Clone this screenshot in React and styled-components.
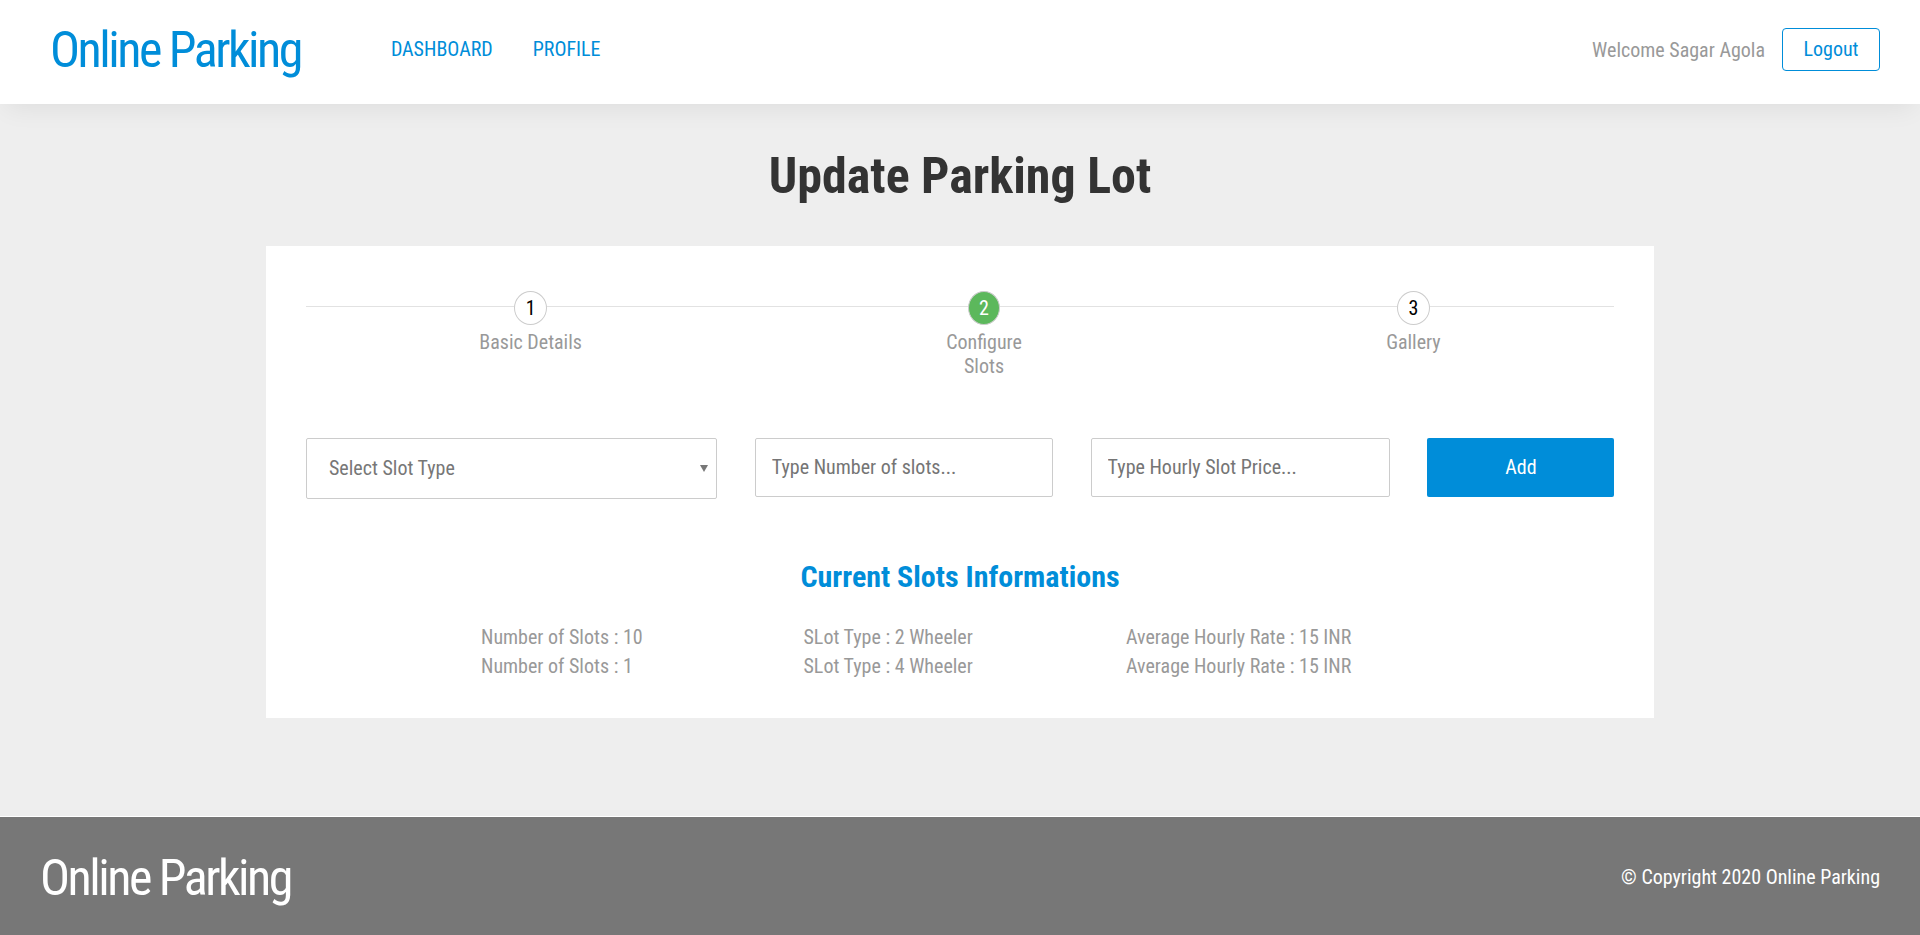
import React from "react";
import styled, { createGlobalStyle } from "styled-components";

const blue = "#008dd9";

const GlobalStyle = createGlobalStyle`
  *, *::before, *::after { box-sizing: border-box; }
  body {
    margin: 0;
    background: #eee;
    color: #999;
    font-family: "Roboto Condensed", Roboto, "Liberation Sans", sans-serif;
    font-stretch: 75%;
    font-size: 20px;
    line-height: 24px;
  }
  h1, h2, p { margin: 0; }
  input, select, button { font: inherit; letter-spacing: inherit; font-stretch: inherit; }
`;

const Page = styled.div`
  display: flex;
  flex-direction: column;
  height: 935px;
  overflow: hidden;
`;

const Header = styled.header`
  display: flex;
  align-items: flex-start;
  height: 104px;
  padding: 20px 40px 0 50px;
  background: #fff;
  box-shadow: 0 10px 24px -6px rgba(0, 0, 0, 0.07);
`;

const Logo = styled.a`
  color: ${(p) => p.$color};
  font-size: 50px;
  line-height: 60px;
  letter-spacing: -2.5px;
  white-space: nowrap;
`;

const Nav = styled.nav`
  display: flex;
  gap: 40px;
  margin: 17px auto 0 90px;
`;

const NavLink = styled.a`
  color: ${blue};
  text-transform: uppercase;
`;

const Welcome = styled.span`
  margin: 18px 17px 0 0;
`;

const LogoutButton = styled.button`
  width: 98px;
  height: 43px;
  margin-top: 8px;
  padding: 0 0 1px;
  border: 1px solid ${blue};
  border-radius: 4px;
  background: #fff;
  color: ${blue};
`;

const Title = styled.h1`
  margin-top: 42px;
  color: #333;
  font-size: 50px;
  line-height: 60px;
  text-align: center;
`;

const Card = styled.main`
  width: 1388px;
  height: 472px;
  margin: 40px auto 0;
  padding: 45px 40px 0;
  background: #fff;
`;

const Steps = styled.div`
  display: flex;
  justify-content: space-around;
  height: 147px;
  background: linear-gradient(#e2e2e2, #e2e2e2) 0 15px / 100% 1px no-repeat;
`;

const Step = styled.div`
  display: flex;
  flex-direction: column;
  align-items: center;
  max-width: 111px;
  text-align: center;
`;

const StepNumber = styled.span`
  width: ${(p) => (p.$active ? 32 : 33)}px;
  height: 34px;
  margin-bottom: 5px;
  border: 1px solid #ccc;
  border-radius: 50%;
  background: ${(p) => (p.$active ? "#5cb85c" : "#fff")};
  color: ${(p) => (p.$active ? "#fff" : "#000")};
  line-height: 32px;
`;

const StepLabel = styled.span``;

const SlotForm = styled.form`
  display: grid;
  grid-template-columns: 411px 298px 299px 187px;
  column-gap: 37.8px;
  align-items: start;
`;

const SelectBox = styled.div`
  display: flex;
  align-items: center;
  justify-content: space-between;
  height: 61px;
  padding: 0 8px 1px 22px;
  border: 1px solid #ccc;
  border-radius: 2px;
  color: #777;
`;

const Arrow = styled.span`
  margin-top: 1px;
  border: 4px solid transparent;
  border-top: 7px solid #777;
  border-bottom: 0;
`;

const Field = styled.input`
  width: 100%;
  height: 59px;
  padding: 0 16px 1px;
  border: 1px solid #ccc;
  border-radius: 2px;
  background: #fff;
  &::placeholder { color: #757575; opacity: 1; }
`;

const AddButton = styled.button`
  height: 59px;
  padding: 0 0 1px;
  border: 0;
  border-radius: 2px;
  background: ${blue};
  color: #fff;
`;

const SubTitle = styled.h2`
  margin-top: 60px;
  color: ${blue};
  font-size: 30px;
  line-height: 36px;
  text-align: center;
`;

const SlotList = styled.div`
  padding: 28px 0 0 175px;
`;

const SlotRow = styled.div`
  display: grid;
  grid-template-columns: 322.5px 322.5px auto;
  line-height: 29px;
`;

const Footer = styled.footer`
  display: flex;
  align-items: center;
  justify-content: space-between;
  height: 119px;
  margin-top: auto;
  padding: 4px 40px 0;
  border-top: 1px solid #fff;
  background: #777;
  color: #fff;
`;

const Copyright = styled.span`
  margin-bottom: 2px;
`;

const steps = [
  { label: "Basic Details" },
  { label: "Configure Slots", active: true },
  { label: "Gallery" },
];

const slots = [
  { count: 10, type: "2 Wheeler", rate: 15 },
  { count: 1, type: "4 Wheeler", rate: 15 },
];

export default function App() {
  return (
    <>
      <GlobalStyle />
      <Page>
        <Header>
          <Logo $color={blue}>Online Parking</Logo>
          <Nav>
            <NavLink>Dashboard</NavLink>
            <NavLink>Profile</NavLink>
          </Nav>
          <Welcome>Welcome Sagar Agola</Welcome>
          <LogoutButton>Logout</LogoutButton>
        </Header>
        <Title>Update Parking Lot</Title>
        <Card>
          <Steps>
            {steps.map((s, i) => (
              <Step key={s.label}>
                <StepNumber $active={s.active}>{i + 1}</StepNumber>
                <StepLabel>{s.label}</StepLabel>
              </Step>
            ))}
          </Steps>
          <SlotForm>
            <SelectBox>
              Select Slot Type
              <Arrow />
            </SelectBox>
            <Field placeholder="Type Number of slots..." />
            <Field placeholder="Type Hourly Slot Price..." />
            <AddButton type="button">Add</AddButton>
          </SlotForm>
          <SubTitle>Current Slots Informations</SubTitle>
          <SlotList>
            {slots.map((s) => (
              <SlotRow key={s.type}>
                <span>Number of Slots : {s.count}</span>
                <span>SLot Type : {s.type}</span>
                <span>Average Hourly Rate : {s.rate} INR</span>
              </SlotRow>
            ))}
          </SlotList>
        </Card>
        <Footer>
          <Logo $color="#fff">Online Parking</Logo>
          <Copyright>© Copyright 2020 Online Parking</Copyright>
        </Footer>
      </Page>
    </>
  );
}
